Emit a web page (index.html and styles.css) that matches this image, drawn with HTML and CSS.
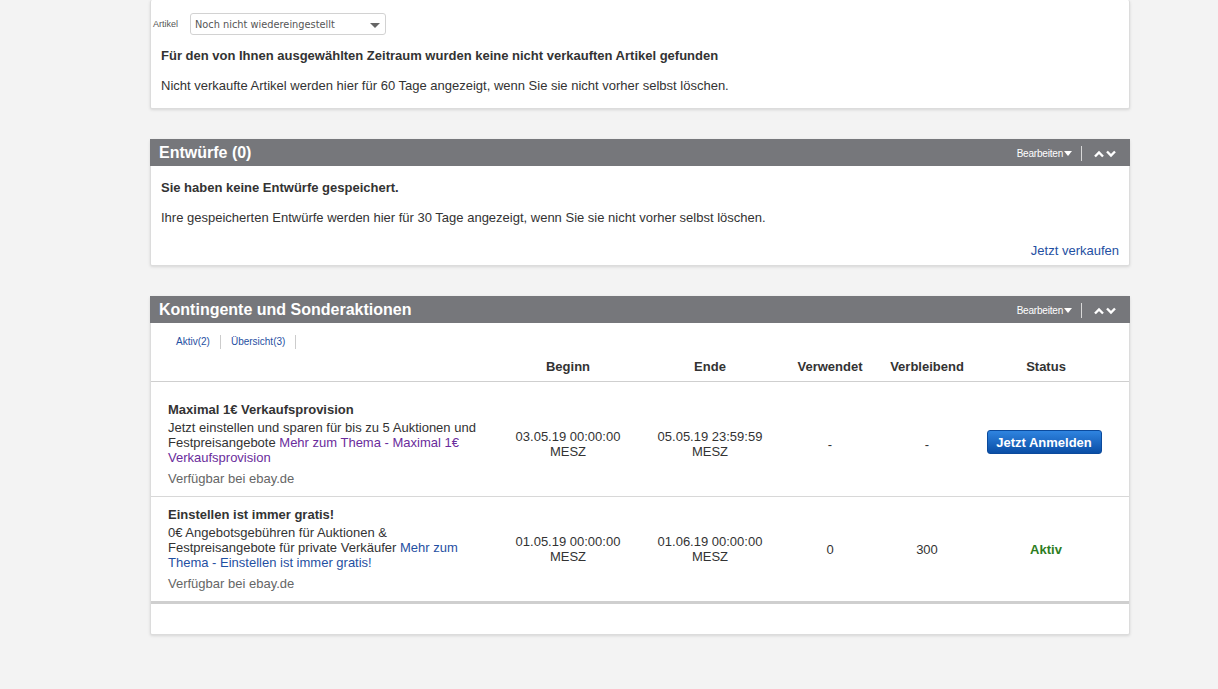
FILE: index.html
```html
<!DOCTYPE html>
<html lang="de">
<head>
<meta charset="utf-8">
<title>Verkaufen</title>
<link rel="stylesheet" href="styles.css">
</head>
<body>
<div class="page">
  <section class="card card-top">
    <div class="filter-row">
      <span class="filter-label">Artikel</span>
      <div class="select"><span>Noch nicht wiedereingestellt</span><span class="caret"></span></div>
    </div>
    <h3 class="msg-title">Für den von Ihnen ausgewählten Zeitraum wurden keine nicht verkauften Artikel gefunden</h3>
    <p class="msg-text">Nicht verkaufte Artikel werden hier für 60 Tage angezeigt, wenn Sie sie nicht vorher selbst löschen.</p>
  </section>

  <section class="card">
    <header class="bar">
      <h2 class="bar-title">Entwürfe (0)</h2>
      <div class="bar-tools">
        <span class="edit">Bearbeiten<span class="tri"></span></span>
        <span class="sep"></span>
        <svg class="chev" width="10" height="8" viewBox="0 0 10 8"><polyline points="1,6.5 5,2.5 9,6.5" fill="none" stroke="#fff" stroke-width="2.4"/></svg>
        <svg class="chev" width="10" height="8" viewBox="0 0 10 8"><polyline points="1,1.5 5,5.5 9,1.5" fill="none" stroke="#fff" stroke-width="2.4"/></svg>
      </div>
    </header>
    <div class="body">
      <h3 class="msg-title b2">Sie haben keine Entwürfe gespeichert.</h3>
      <p class="msg-text b2">Ihre gespeicherten Entwürfe werden hier für 30 Tage angezeigt, wenn Sie sie nicht vorher selbst löschen.</p>
      <div class="right-link"><a href="#">Jetzt verkaufen</a></div>
    </div>
  </section>

  <section class="card">
    <header class="bar">
      <h2 class="bar-title">Kontingente und Sonderaktionen</h2>
      <div class="bar-tools">
        <span class="edit">Bearbeiten<span class="tri"></span></span>
        <span class="sep"></span>
        <svg class="chev" width="10" height="8" viewBox="0 0 10 8"><polyline points="1,6.5 5,2.5 9,6.5" fill="none" stroke="#fff" stroke-width="2.4"/></svg>
        <svg class="chev" width="10" height="8" viewBox="0 0 10 8"><polyline points="1,1.5 5,5.5 9,1.5" fill="none" stroke="#fff" stroke-width="2.4"/></svg>
      </div>
    </header>
    <nav class="tabs">
      <a href="#" class="tab">Aktiv(2)</a>
      <a href="#" class="tab">Übersicht(3)</a>
    </nav>
    <div class="table">
      <div class="trow thead">
        <div></div>
        <div class="c">Beginn</div>
        <div class="c">Ende</div>
        <div class="c">Verwendet</div>
        <div class="c">Verbleibend</div>
        <div class="c">Status</div>
      </div>
      <div class="trow tr first">
        <div class="info">
          <div class="info-title">Maximal 1€ Verkaufsprovision</div>
          <div class="info-desc">Jetzt einstellen und sparen für bis zu 5 Auktionen und Festpreisangebote <a href="#" class="visited">Mehr zum Thema - Maximal 1€ Verkaufsprovision</a></div>
          <div class="info-site">Verfügbar bei ebay.de</div>
        </div>
        <div class="c">03.05.19 00:00:00<br>MESZ</div>
        <div class="c">05.05.19 23:59:59<br>MESZ</div>
        <div class="c">-</div>
        <div class="c">-</div>
        <div class="c"><button class="btn">Jetzt Anmelden</button></div>
      </div>
      <div class="trow tr last">
        <div class="info">
          <div class="info-title">Einstellen ist immer gratis!</div>
          <div class="info-desc">0€ Angebotsgebühren für Auktionen &amp; Festpreisangebote für private Verkäufer <a href="#" class="link">Mehr zum Thema - Einstellen ist immer gratis!</a></div>
          <div class="info-site">Verfügbar bei ebay.de</div>
        </div>
        <div class="c">01.05.19 00:00:00<br>MESZ</div>
        <div class="c">01.06.19 00:00:00<br>MESZ</div>
        <div class="c">0</div>
        <div class="c">300</div>
        <div class="c status">Aktiv</div>
      </div>
    </div>
    <div class="table-foot"></div>
  </section>
</div>
</body>
</html>
```

FILE: styles.css
```css
* { box-sizing: border-box; }
html, body { margin: 0; padding: 0; }
body {
  background: #f3f3f3;
  font-family: "Liberation Sans", Arial, sans-serif;
  color: #333;
  font-size: 13px;
}
.page {
  width: 980px;
  margin-left: 150px;
  display: flex;
  flex-direction: column;
  gap: 30px;
  padding-bottom: 60px;
}
.card {
  background: #fff;
  border: 1px solid #dcdcdc;
  border-radius: 2px;
  box-shadow: 0 1px 3px rgba(0,0,0,0.12);
}
.card-top {
  border-top: none;
  padding: 13px 0 15px 0;
}
.filter-row {
  display: flex;
  align-items: center;
  gap: 12px;
  padding-left: 2px;
  height: 22px;
}
.filter-label { font-size: 9px; color: #555; }
.select {
  width: 196px;
  height: 22px;
  border: 1px solid #d2d2d2;
  border-radius: 3px;
  display: flex;
  align-items: center;
  justify-content: space-between;
  padding: 0 5px 0 4px;
  font-family: "DejaVu Sans", Verdana, sans-serif;
  font-size: 9.8px;
  color: #555;
}
.caret {
  width: 0; height: 0;
  border-left: 5px solid transparent;
  border-right: 5px solid transparent;
  border-top: 5px solid #666;
  margin-top: 2px;
}
.msg-title {
  margin: 13px 0 0 0;
  padding-left: 10px;
  font-size: 13px;
  font-weight: bold;
  line-height: 15px;
  color: #333;
}
.msg-text {
  margin: 15px 0 0 0;
  padding-left: 10px;
  font-size: 13px;
  line-height: 15px;
  color: #333;
}
.bar {
  height: 27px;
  background: #76777b;
  display: flex;
  align-items: center;
  justify-content: space-between;
  padding: 0 14px 0 9px;
  margin: -1px -1px 0 -1px;
}
.bar-title {
  margin: 0;
  color: #fff;
  font-size: 16px;
  font-weight: bold;
}
.bar-tools {
  display: flex;
  align-items: center;
  color: #fff;
  padding-top: 2px;
}
.edit {
  font-size: 10px;
  display: flex;
  align-items: center;
  letter-spacing: -0.2px;
}
.tri {
  width: 0; height: 0;
  border-left: 4px solid transparent;
  border-right: 4px solid transparent;
  border-top: 5px solid #fff;
  margin-left: 1px;
}
.sep {
  width: 1px;
  height: 15px;
  background: #d8d8d8;
  margin: 0 10px 0 9px;
}
.chev { display: block; margin-left: 2px; }
.body { padding: 1px 10px 7px 0; }
.body .msg-title.b2 { margin-top: 13px; }
.body .msg-text.b2 { margin-top: 15px; }
.right-link {
  text-align: right;
  margin-top: 18px;
  line-height: 15px;
}
.right-link a {
  color: #1f50a2;
  text-decoration: none;
  font-size: 13px;
}
.tabs {
  display: flex;
  align-items: flex-start;
  padding: 12px 0 0 25px;
  height: 30px;
}
.tab {
  font-size: 10px;
  color: #1f50a2;
  text-decoration: none;
  padding: 0 10px;
  line-height: 14px;
  border-right: 1px solid #ccc;
}
.tab:first-child { padding-left: 0; }
.table { width: 100%; }
.trow {
  display: grid;
  grid-template-columns: 346px 142px 142px 98px 96px 1fr;
  padding-right: 12px;
}
.thead {
  height: 29px;
  align-items: center;
  border-bottom: 1px solid #cfcfcf;
  font-weight: bold;
  font-size: 13px;
  padding-bottom: 1px;
}
.c { text-align: center; line-height: 15px; color: #333; }
.tr { align-items: center; }
.tr.first { padding-top: 20px; padding-bottom: 10px; border-bottom: 1px solid #d8d8d8; }
.tr.last { padding-top: 10px; padding-bottom: 10px; border-bottom: 3px solid #cfcfcf; }
.info { padding-left: 17px; padding-right: 16px; }
.info-title { font-weight: bold; line-height: 15px; }
.info-desc { margin-top: 3px; line-height: 15px; }
.info-site { margin-top: 6px; line-height: 15px; color: #666; }
.info a { text-decoration: none; }
.visited { color: #6a2c9c; }
.link { color: #1f50a2; }
.btn {
  font-family: "Liberation Sans", Arial, sans-serif;
  font-weight: bold;
  font-size: 13px;
  color: #fff;
  width: 115px;
  height: 24px;
  border: 1px solid #0b4a9c;
  border-radius: 3px;
  background: linear-gradient(#2f84e0, #0a4ea6);
  margin-top: -4px;
  margin-left: -4px;
}
.status { color: #2d7d1e; font-weight: bold; }
.table-foot { height: 30px; }
```
